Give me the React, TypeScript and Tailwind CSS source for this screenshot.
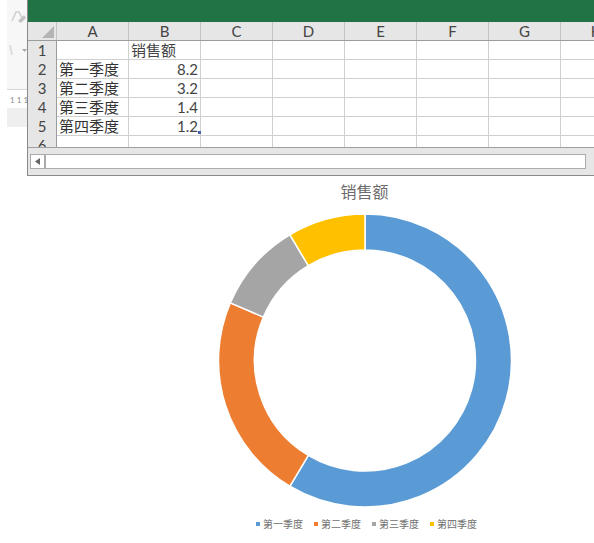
const COLS = ["A", "B", "C", "D", "E", "F", "G", "H"];

const ROWS = [
  { id: "1", a: "", b: "销售额", num: false },
  { id: "2", a: "第一季度", b: "8.2", num: true },
  { id: "3", a: "第二季度", b: "3.2", num: true },
  { id: "4", a: "第三季度", b: "1.4", num: true },
  { id: "5", a: "第四季度", b: "1.2", num: true },
  { id: "6", a: "", b: "", num: false },
];

const SLICES = [
  { name: "第一季度", value: 8.2, color: "#5b9bd5", dot: "bg-[#5b9bd5]" },
  { name: "第二季度", value: 3.2, color: "#ed7d31", dot: "bg-[#ed7d31]" },
  { name: "第三季度", value: 1.4, color: "#a5a5a5", dot: "bg-[#a5a5a5]" },
  { name: "第四季度", value: 1.2, color: "#ffc000", dot: "bg-[#ffc000]" },
];

function arcPath(start: number, end: number) {
  const R = 146.5;
  const r = 110.5;
  const cx = 147;
  const cy = 147.5;
  const pt = (rad: number, a: number) =>
    `${(cx + rad * Math.sin(a)).toFixed(2)} ${(cy - rad * Math.cos(a)).toFixed(2)}`;
  const large = end - start > Math.PI ? 1 : 0;
  return `M${pt(R, start)} A${R} ${R} 0 ${large} 1 ${pt(R, end)} L${pt(r, end)} A${r} ${r} 0 ${large} 0 ${pt(r, start)} Z`;
}

function Donut() {
  const total = SLICES.reduce((s, x) => s + x.value, 0);
  let acc = 0;
  return (
    <svg width="294" height="295" viewBox="0 0 294 295" className="block">
      {SLICES.map((s) => {
        const start = (acc / total) * Math.PI * 2;
        acc += s.value;
        const end = (acc / total) * Math.PI * 2;
        return (
          <path key={s.name} d={arcPath(start, end)} fill={s.color} stroke="#ffffff" strokeWidth="1.5" />
        );
      })}
    </svg>
  );
}

function Sheet() {
  return (
    <div className="flex-1 min-w-0 h-[176px] overflow-hidden bg-[#e6e6e6] border-l border-b border-[#8a8a8a] flex flex-col">
      <div className="h-[22px] shrink-0 bg-[#217346]" />

      {/* column headers */}
      <div className="flex h-[19px] shrink-0 bg-[#e6e6e6] border-b border-[#9c9c9c]">
        <div className="w-[29px] shrink-0 border-r border-[#c4c4c4] flex items-end justify-end pr-[2px] pb-[2px]">
          <svg width="12" height="12" viewBox="0 0 12 12">
            <path d="M12 0V12H0Z" fill="#b4b4b4" />
          </svg>
        </div>
        {COLS.map((c) => (
          <div
            key={c}
            className="w-[72px] shrink-0 border-r border-[#c4c4c4] flex items-center justify-center text-[15px] text-[#444]"
          >
            {c}
          </div>
        ))}
      </div>

      {/* rows */}
      <div className="h-[106px] shrink-0 overflow-hidden">
        {ROWS.map((row) => (
          <div key={row.id} className="flex h-[19px]">
            <div className="w-[29px] shrink-0 bg-[#e6e6e6] border-r border-[#9c9c9c] flex items-center justify-center text-[15px] text-[#444]">
              {row.id}
            </div>
            <div className="w-[72px] shrink-0 bg-white border-r border-b border-[#d0d0d0] pl-[2px] flex items-center text-[15px] leading-none text-[#333]">
              {row.a}
            </div>
            <div
              className={`w-[72px] shrink-0 relative bg-white border-r border-b border-[#d0d0d0] px-[2px] flex items-center text-[15px] leading-none text-[#444] ${
                row.num ? "justify-end" : "justify-start"
              }`}
            >
              {row.b}
              {row.id === "5" && <div className="absolute right-[-1px] bottom-[1px] w-[3px] h-[3px] bg-[#4a5ea8]" />}
            </div>
            {COLS.slice(2).map((c) => (
              <div key={c} className="w-[72px] shrink-0 bg-white border-r border-b border-[#d0d0d0]" />
            ))}
          </div>
        ))}
      </div>

      {/* scrollbar */}
      <div className="border-t border-[#a0a0a0] h-[28px] shrink-0 pt-[6px] pl-[2px] flex items-start">
        <div className="w-[15px] h-[15px] bg-white border border-[#ababab] flex items-center justify-center">
          <svg width="5" height="7" viewBox="0 0 5 7">
            <path d="M5 0V7L0 3.5Z" fill="#666" />
          </svg>
        </div>
        <div className="w-[541px] h-[15px] bg-white border border-[#ababab]" />
      </div>
    </div>
  );
}

function RibbonScrap() {
  return (
    <div className="w-[27px] h-[176px] shrink-0 bg-white flex flex-col items-end">
      <div className="h-[89px] w-[20px] bg-[#f7f7f7] pt-[9px] pl-[3px]">
        <svg width="17" height="16" viewBox="0 0 17 16">
          <path d="M2 12 L6 3 L9 3 L12 9" fill="none" stroke="#cfcfcf" strokeWidth="1.5" />
          <path d="M8 12 L14 6 L16 9 L11 14Z" fill="#c4c4c4" />
        </svg>
        <div className="flex items-center gap-[10px] mt-[20px]">
          <div className="w-[2px] h-[10px] bg-[#dcdcdc] -rotate-12" />
          <svg width="5" height="3" viewBox="0 0 5 3">
            <path d="M0 0H5L2.5 3Z" fill="#a8a8a8" />
          </svg>
        </div>
      </div>
      <div className="w-[20px] h-[19px] bg-white border-t border-[#d8d8d8] text-[8px] leading-[20px] text-[#8c8c8c] whitespace-nowrap overflow-hidden pl-[3px] [-webkit-font-smoothing:antialiased]">
        1 1 1
      </div>
      <div className="w-[20px] h-[19px] bg-[#efefef]" />
    </div>
  );
}

export default function App() {
  return (
    <div className="w-[594px] h-[543px] overflow-hidden bg-white font-['Lato','Noto_Sans_CJK_SC',sans-serif]">
      <div className="flex">
        <RibbonScrap />
        <Sheet />
      </div>

      {/* chart */}
      <div className="flex flex-col items-center pl-[135px]">
        <div className="h-[37px] pt-[4px] text-[16px] leading-[24px] text-[#6b6b6b]">销售额</div>
        <Donut />
        <div className="flex items-center gap-[11px] mt-[9px] pl-[4px] text-[10px] leading-[14px] text-[#6f6f6f]">
          {SLICES.map((s) => (
            <div key={s.name} className="flex items-center gap-[3px]">
              <span className={`w-[4px] h-[4px] ${s.dot}`} />
              {s.name}
            </div>
          ))}
        </div>
      </div>
    </div>
  );
}
